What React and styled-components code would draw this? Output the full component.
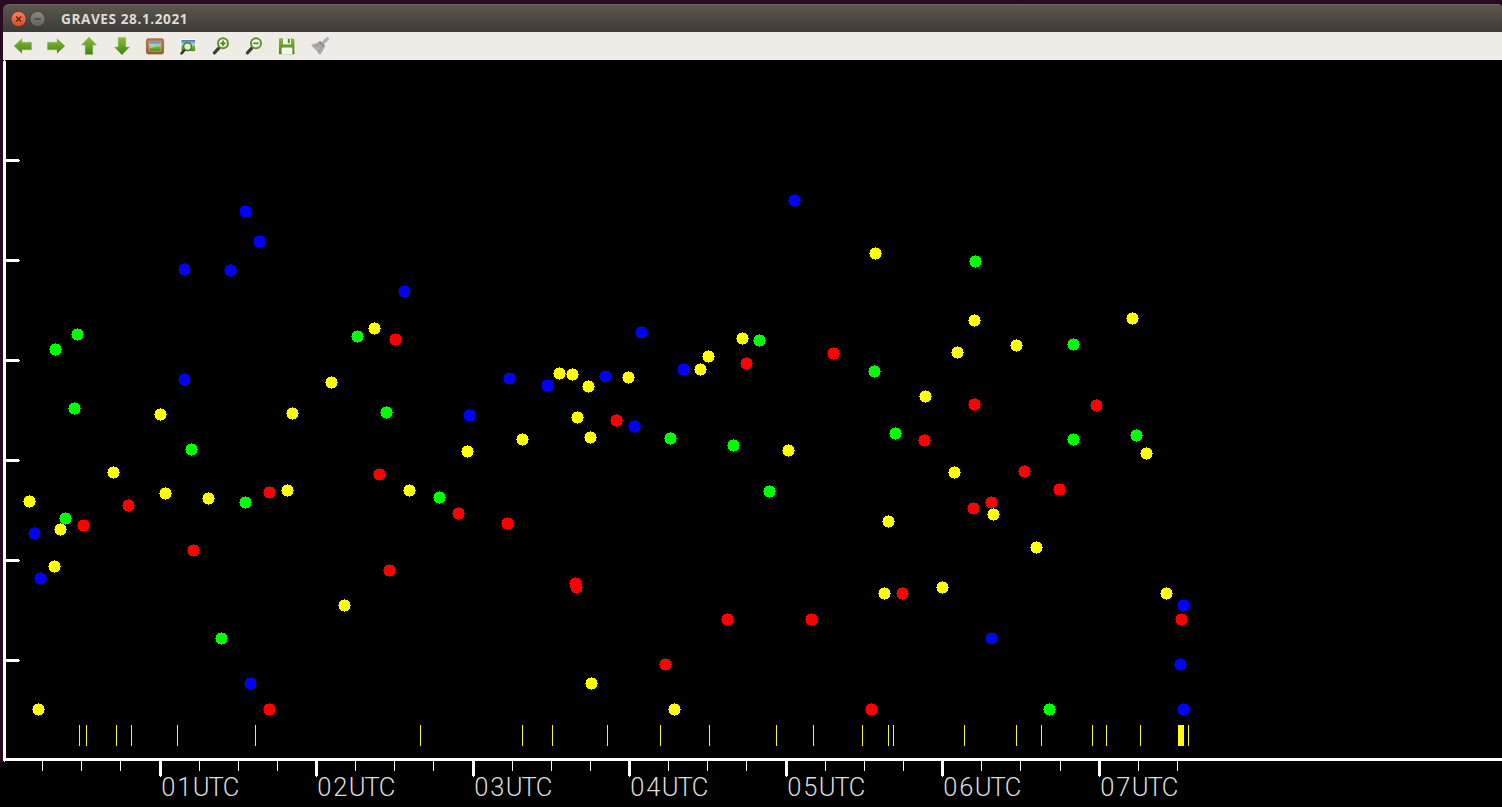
import React from 'react'
import styled, { createGlobalStyle } from 'styled-components';

const GlobalStyle = createGlobalStyle`
  body {
    margin: 0;
    background: #000;
    overflow: hidden;
  }
`;

const Desktop = styled.div`
  box-sizing: border-box;
  width: 1502px;
  height: 807px;
  padding: 4px 0 0 3px;
  background: linear-gradient(#2a0a22 0 763px, #000 763px);
`;

const Window = styled.div`
  display: flex;
  flex-direction: column;
  height: 803px;
`;

const TitleBar = styled.div`
  box-sizing: border-box;
  display: flex;
  align-items: center;
  height: 28px;
  padding-left: 8px;
  border-top: 1px solid #6b665e;
  border-radius: 6px 4px 0 0;
  background: linear-gradient(#5b574e, #3d3b37);
`;

const WindowButton = styled.span`
  display: flex;
  width: 16px;
  height: 16px;
  margin-right: 3px;
`;

const Title = styled.h1`
  margin: 0 0 0 12px;
  font: bold 13.6px/20px 'Open Sans', sans-serif;
  letter-spacing: 0.58px;
  color: #dfdbd2;
  white-space: nowrap;
`;

const Toolbar = styled.div`
  display: flex;
  align-items: center;
  gap: 13px;
  height: 28px;
  padding-left: 10px;
  background: #efebe6;
`;

const ToolIcon = styled.svg`
  display: block;
  flex: none;
  width: 20px;
  height: 20px;
`;

const Plot = styled.svg`
  display: block;
  flex: none;
  width: 1499px;
  height: 747px;
  background: #000;
`;

const HourLabel = styled.text`
  font-family: Roboto, sans-serif;
  font-weight: 300;
  font-size: 25.5px;
  text-anchor: middle;
  fill: #dcdcdc;
`;

const COLORS = { y: '#ffff00', r: '#ff0000', g: '#00ff00', b: '#0000ff' };

const ECHOES = {
  y: [
    [29, 501], [60, 529], [54, 566], [38, 709], [113, 472], [160, 414], [165, 493], [208, 498],
    [292, 413], [287, 490], [344, 605], [331, 382], [374, 328], [409, 490], [467, 451], [522, 439],
    [559, 373], [572, 374], [588, 386], [628, 377], [577, 417], [590, 437], [591, 683], [674, 709],
    [700, 369], [708, 356], [742, 338], [788, 450], [875, 253], [925, 396], [888, 521], [884, 593],
    [942, 587], [957, 352], [974, 320], [954, 472], [993, 514], [1016, 345], [1036, 547],
    [1132, 318], [1146, 453], [1166, 593],
  ],
  g: [
    [55, 349], [77, 334], [74, 408], [65, 518], [191, 449], [245, 502], [221, 638], [357, 336],
    [386, 412], [439, 497], [670, 438], [733, 445], [759, 340], [769, 491], [874, 371], [895, 433],
    [975, 261], [1073, 344], [1073, 439], [1049, 709], [1136, 435],
  ],
  b: [
    [34, 533], [40, 578], [184, 269], [184, 379], [230, 270], [245, 211], [259, 241], [250, 683],
    [404, 291], [469, 415], [509, 378], [547, 385], [605, 376], [641, 332], [634, 426], [683, 369],
    [794, 200], [991, 638], [1183, 605], [1180, 664], [1183, 709],
  ],
  r: [
    [83, 525], [128, 505], [193, 550], [269, 492], [269, 709], [379, 474], [389, 570], [395, 339],
    [458, 513], [507, 523], [575, 583], [576, 587], [616, 420], [665, 664], [727, 619], [746, 363],
    [811, 619], [833, 353], [871, 709], [902, 593], [924, 440], [974, 404], [973, 508], [991, 502],
    [1024, 471], [1059, 489], [1096, 405], [1181, 619],
  ],
};

const LEVELS = [160, 260, 360, 460, 560, 660];
const HOURS = [160, 316, 473, 629, 786, 942, 1099];
const QUARTERS = [
  42, 81, 120, 199, 238, 277, 355, 394, 433, 512, 551, 590, 668, 707, 746,
  825, 864, 903, 981, 1020, 1060, 1138, 1177,
];
const EVENTS = [
  79, 86, 116, 131, 177, 255, 420, 522, 552, 607, 660, 709, 776, 813, 862,
  888, 893, 964, 1016, 1041, 1092, 1106, 1140, 1188,
];
const LETTER_CENTERS = [7.8, 23.8, 40.7, 55.7, 70.6];

// unsmoothed disc, half width of every row from top to bottom
const DISC = [0, 3, 4, 5, 5, 5, 6, 5, 5, 5, 4, 3, 0]
  .map((half, row) => `M${-half} ${row - 6}h${2 * half + 1}v1h${-2 * half - 1}z`)
  .join('');

const Echo = ({ x, y, color }) => (
  <path transform={`translate(${x} ${y})`} d={DISC} fill={color} shapeRendering="crispEdges" />
)

const Chart = () => (
  <Plot viewBox="3 60 1499 747">
    <g fill="#fff" shapeRendering="crispEdges">
      <rect x="3" y="61" width="3" height="700" />
      <rect x="4" y="60" width="1" height="702" />
      <rect x="3" y="758" width="1499" height="3" />
      {LEVELS.map((y) => (
        <path key={y} d={`M6 ${y - 1}h13v1h1v1h-1v1h-13z`} />
      ))}
      {HOURS.map((x) => (
        <path key={x} d={`M${x - 1} 761h3v15h-1v1h-1v-1h-1z`} />
      ))}
      {QUARTERS.map((x) => (
        <rect key={x} x={x} y="761" width="1" height="10" />
      ))}
    </g>
    <g fill="#f4f43c" shapeRendering="crispEdges">
      {EVENTS.map((x) => (
        <rect key={x} x={x} y="725" width="1" height="21" />
      ))}
      <rect x="1178" y="725" width="6" height="21" fill="#ff0" />
    </g>
    {Object.keys(ECHOES).map((key) =>
      ECHOES[key].map(([x, y]) => <Echo key={`${x}-${y}`} x={x} y={y} color={COLORS[key]} />)
    )}
    {HOURS.map((x, num) => (
      <HourLabel key={x} x={LETTER_CENTERS.map((c) => x + 0.5 + c).join(' ')} y="796.3">
        {`0${num + 1}UTC`}
      </HourLabel>
    ))}
  </Plot>
)

const Gradients = () => (
  <svg width="0" height="0" style={{ display: 'block' }}>
    <defs>
      <linearGradient id="leaf" gradientUnits="userSpaceOnUse" x1="0" y1="2" x2="0" y2="18">
        <stop offset="0" stopColor="#86bd3c" />
        <stop offset="1" stopColor="#44840f" />
      </linearGradient>
      <linearGradient id="sky" x1="0" y1="0" x2="0" y2="1">
        <stop offset="0" stopColor="#3f78bd" />
        <stop offset="0.42" stopColor="#b9d6e4" />
        <stop offset="0.55" stopColor="#7fb544" />
        <stop offset="1" stopColor="#468c18" />
      </linearGradient>
      <linearGradient id="wood" x1="0" y1="0" x2="0" y2="1">
        <stop offset="0" stopColor="#c07c4a" />
        <stop offset="1" stopColor="#9b592b" />
      </linearGradient>
      <linearGradient id="close" x1="0" y1="0" x2="0" y2="1">
        <stop offset="0" stopColor="#f58363" />
        <stop offset="1" stopColor="#dc4a1d" />
      </linearGradient>
      <linearGradient id="minimize" x1="0" y1="0" x2="0" y2="1">
        <stop offset="0" stopColor="#8b8981" />
        <stop offset="1" stopColor="#62605a" />
      </linearGradient>
    </defs>
  </svg>
)

const ARROWS = {
  left: 'M1 10L9 2.4V6.2H18.6V13.8H9V17.6Z',
  right: 'M19 10L11 2.4V6.2H1.4V13.8H11V17.6Z',
  up: 'M10 1L17.6 9H13.8V18.6H6.2V9H2.4Z',
  down: 'M10 19L17.6 11H13.8V1.4H6.2V11H2.4Z',
};

const Arrow = ({ to }) => (
  <ToolIcon viewBox="0 0 20 20">
    <path d={ARROWS[to]} fill="url(#leaf)" stroke="#8fbf63" strokeWidth="0.4" strokeLinejoin="round" />
  </ToolIcon>
)

const Magnifier = ({ sign }) => (
  <ToolIcon viewBox="0 0 20 20">
    <path d="M3.4 16.8L7.8 12.2" stroke="#3c4138" strokeWidth="3.2" strokeLinecap="round" />
    <circle cx="12" cy="7.3" r="5" fill="#f4f8ec" stroke="#5b9529" strokeWidth="2" />
    <path d={sign} stroke="#4f8821" strokeWidth="1.7" />
  </ToolIcon>
)

export default function App() {
  return (
    <Desktop>
      <GlobalStyle />
      <Gradients />
      <Window>
        <TitleBar>
          <WindowButton>
            <svg width="16" height="16" viewBox="0 0 16 16">
              <circle cx="7.6" cy="8" r="7.6" fill="url(#close)" stroke="#34322d" strokeWidth="0.6" />
              <path d="M5.1 5.5L10.1 10.5M10.1 5.5L5.1 10.5" stroke="#5b2413" strokeWidth="1.3" />
            </svg>
          </WindowButton>
          <WindowButton>
            <svg width="16" height="16" viewBox="0 0 16 16">
              <circle cx="7.6" cy="8" r="7.6" fill="url(#minimize)" stroke="#34322d" strokeWidth="0.6" />
              <path d="M4.2 8H11" stroke="#3b3935" strokeWidth="1.2" />
            </svg>
          </WindowButton>
          <Title>GRAVES 28.1.2021</Title>
        </TitleBar>
        <Toolbar>
          <Arrow to="left" />
          <Arrow to="right" />
          <Arrow to="up" />
          <Arrow to="down" />
          <ToolIcon viewBox="0 0 20 20">
            <rect x="1.4" y="2.8" width="17.2" height="15.2" rx="2" fill="url(#wood)" stroke="#96562c" strokeWidth="0.7" />
            <rect x="4" y="5.3" width="12" height="9.8" fill="url(#sky)" stroke="#d8bd94" strokeWidth="0.5" />
            <path d="M4.3 11.5Q9 8.2 15.7 8.6V10Q9 10.5 4.3 12.6Z" fill="#a9cf78" />
          </ToolIcon>
          <ToolIcon viewBox="0 0 20 20">
            <rect x="2.4" y="3" width="15.8" height="13.4" rx="0.5" fill="#fbfcfb" />
            <rect x="3.4" y="4" width="13.8" height="11.2" fill="url(#sky)" />
            <path d="M3.5 17.3L6.2 14.4" stroke="#33382f" strokeWidth="2.6" strokeLinecap="round" />
            <circle cx="9.5" cy="10.6" r="3.9" fill="#e2edd2" stroke="#427b1e" strokeWidth="1.4" />
          </ToolIcon>
          <Magnifier sign="M9.3 7.3H14.7M12 4.6V10" />
          <Magnifier sign="M9.3 7.3H14.7" />
          <ToolIcon viewBox="0 0 20 20">
            <path d="M2.8 2.2H15.8L17.4 3.8V17.4Q17.4 18.2 16.6 18.2H2.8Q2 18.2 2 17.4V3Q2 2.2 2.8 2.2Z" fill="url(#leaf)" />
            <rect x="6" y="2.2" width="8" height="6.2" fill="#f6f8f2" />
            <rect x="10.8" y="2.8" width="2" height="4.4" fill="#4f8d1c" />
            <rect x="4.6" y="11.6" width="10.8" height="6.6" rx="0.8" fill="#f6f8f2" />
          </ToolIcon>
          <ToolIcon viewBox="0 0 20 20">
            <path d="M13.6 6.4L17.4 2.8" stroke="#b0b0ae" strokeWidth="3.2" strokeLinecap="round" />
            <path d="M10.2 5L15 9.8Q13.5 15 10 19Q7.5 17.5 6.8 14.8Q3 12.5 1.2 8.8Q6 8 10.2 5Z" fill="#afaeac" />
            <path d="M10.2 5L15 9.8L13.9 11.8L8.2 6.4Z" fill="#8f8f8d" />
            <path d="M9 8.8L4.5 10.4M11 11L8.6 16" stroke="#8b8b89" strokeWidth="0.8" />
          </ToolIcon>
        </Toolbar>
        <Chart />
      </Window>
    </Desktop>
  )
}
